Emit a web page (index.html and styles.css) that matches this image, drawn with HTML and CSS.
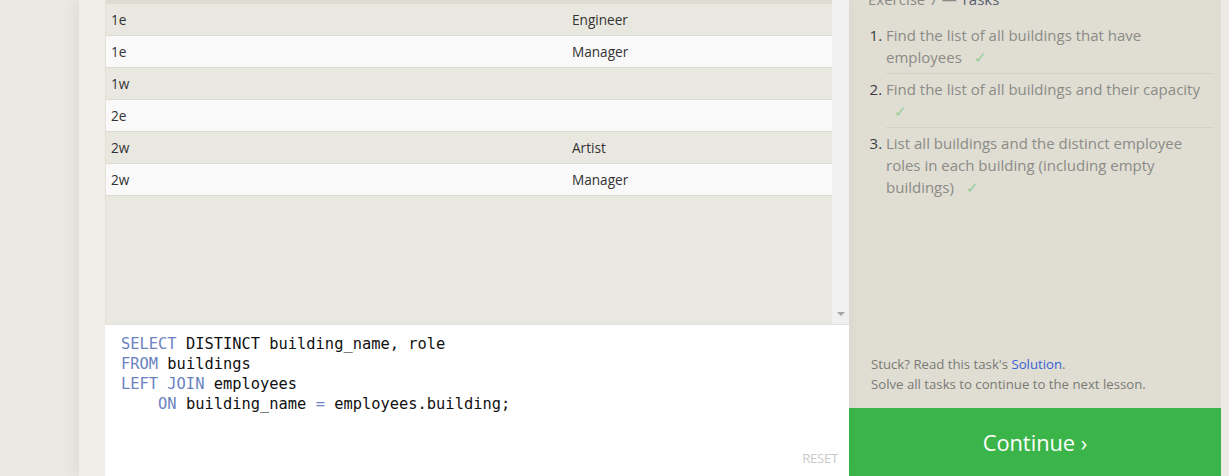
FILE: index.html
```html
<!DOCTYPE html>
<html lang="en">
<head>
<meta charset="utf-8">
<title>SQL Lesson — Exercise 7</title>
<link rel="stylesheet" href="styles.css">
</head>
<body>
<div class="page">
  <div class="gutter-left"></div>
  <main class="lesson">
    <div class="results">
      <div class="table-wrap">
        <div class="table-head-edge"></div>
        <table class="result-table">
          <tbody>
            <tr><td class="c1">1e</td><td>Engineer</td></tr>
            <tr><td class="c1">1e</td><td>Manager</td></tr>
            <tr><td class="c1">1w</td><td></td></tr>
            <tr><td class="c1">2e</td><td></td></tr>
            <tr><td class="c1">2w</td><td>Artist</td></tr>
            <tr><td class="c1">2w</td><td>Manager</td></tr>
          </tbody>
        </table>
        <div class="filler"></div>
      </div>
      <div class="scrollbar"><span class="arrow"></span></div>
    </div>
    <div class="editor">
<pre class="code"><span class="kw">SELECT</span> DISTINCT building_name, role
<span class="kw">FROM</span> buildings
<span class="kw">LEFT JOIN</span> employees
    <span class="kw">ON</span> building_name <span class="op">=</span> employees.building;</pre>
      <span class="reset">RESET</span>
    </div>
  </main>
  <aside class="sidebar">
    <h2 class="tasks-title">Exercise 7 — <span class="dark">Tasks</span></h2>
    <ol class="tasks">
      <li>Find the list of all buildings that have employees <span class="check">✓</span></li>
      <li>Find the list of all buildings and their capacity <span class="check">✓</span></li>
      <li>List all buildings and the distinct employee roles in each building (including empty buildings) <span class="check">✓</span></li>
    </ol>
    <div class="help">
      <p>Stuck? Read this task's <a href="#">Solution</a>.</p>
      <p>Solve all tasks to continue to the next lesson.</p>
    </div>
    <button class="continue">Continue ›</button>
  </aside>
  <div class="gutter-right"></div>
</div>
</body>
</html>
```

FILE: styles.css
```css
html, body {
  margin: 0;
  padding: 0;
  height: 100%;
  overflow: hidden;
}
body {
  background: #ece9e5;
  font-family: "Open Sans", "Noto Sans", sans-serif;
}
.page {
  display: flex;
  height: 476px;
}
.gutter-left {
  width: 79px;
  flex: none;
  background: #ece9e5;
}
.lesson {
  width: 744px;
  flex: none;
  padding-left: 26px;
  background: #efede6;
  box-shadow: -4px 0 14px rgba(60, 50, 40, 0.08);
  display: flex;
  flex-direction: column;
  position: relative;
  z-index: 1;
}
.results {
  display: flex;
  height: 325px;
  flex: none;
  border-bottom: 1px solid #e2e0da;
  box-sizing: border-box;
}
.table-wrap {
  flex: 1;
  display: flex;
  flex-direction: column;
  background: #e9e8e0;
  border-left: 1px solid #e3e1da;
}
.table-head-edge {
  height: 4px;
  background: #dddbd2;
}
.result-table {
  width: 100%;
  border-collapse: collapse;
  font-size: 13.6px;
  color: #333;
}
.result-table td {
  height: 31px;
  padding: 0 0 0 5px;
  border-bottom: 1px solid #dcdbd4;
  vertical-align: middle;
}
.result-table td.c1 {
  width: 456px;
}
.result-table tr:nth-child(odd) {
  background: #e9e8e0;
}
.result-table tr:nth-child(even) {
  background: #f9f9f9;
}
.filler {
  flex: 1;
}
.scrollbar {
  width: 17px;
  flex: none;
  background: #f0f0f0;
  display: flex;
  flex-direction: column;
  justify-content: flex-end;
  align-items: center;
  padding-bottom: 8px;
  box-sizing: border-box;
}
.arrow {
  width: 0;
  height: 0;
  border-left: 4px solid transparent;
  border-right: 4px solid transparent;
  border-top: 4px solid #a3a3a3;
}
.editor {
  flex: 1;
  background: #fff;
  position: relative;
}
.code {
  margin: 0;
  padding: 9px 0 0 16px;
  font-family: "DejaVu Sans Mono", "Liberation Mono", monospace;
  font-size: 15.4px;
  line-height: 20px;
  color: #111;
}
.code .kw {
  color: #6b82c0;
}
.code .op {
  color: #6b82c0;
}
.reset {
  position: absolute;
  right: 11px;
  bottom: 9px;
  font-size: 13px;
  color: #c9c9c9;
  letter-spacing: -0.2px;
}
.sidebar {
  width: 372px;
  flex: none;
  background: #e0ded3;
  display: flex;
  flex-direction: column;
  box-sizing: border-box;
}
.tasks-title {
  margin: -12px 0 0 19px;
  font-size: 15px;
  font-weight: normal;
  color: #8a8a86;
  line-height: 22px;
}
.tasks-title .dark {
  color: #5a6070;
}
.tasks {
  margin: 14px 7px 0 37px;
  padding: 0;
  font-size: 15px;
  line-height: 22px;
  color: #8b8b87;
}
.tasks li {
  padding: 0 0 5px 0;
  border-bottom: 1px solid #d4d2c7;
  margin-bottom: 4px;
}
.tasks li:last-child {
  border-bottom: none;
}
.tasks li::marker {
  color: #3c3c44;
}
.check {
  color: #90cf98;
  margin-left: 8px;
}
.help {
  margin-top: auto;
  padding: 0 0 14px 22px;
  font-size: 13.2px;
  line-height: 20px;
  color: #7a7a76;
}
.help p {
  margin: 0;
}
.help a {
  color: #3a5fd8;
  text-decoration: none;
}
.continue {
  height: 68px;
  flex: none;
  border: none;
  background: #3bb54a;
  color: #fff;
  font-family: "Open Sans", "Noto Sans", sans-serif;
  font-size: 21.8px;
  padding: 0;
  cursor: pointer;
}
.gutter-right {
  flex: 1;
  background: #eeebe6;
}
```
